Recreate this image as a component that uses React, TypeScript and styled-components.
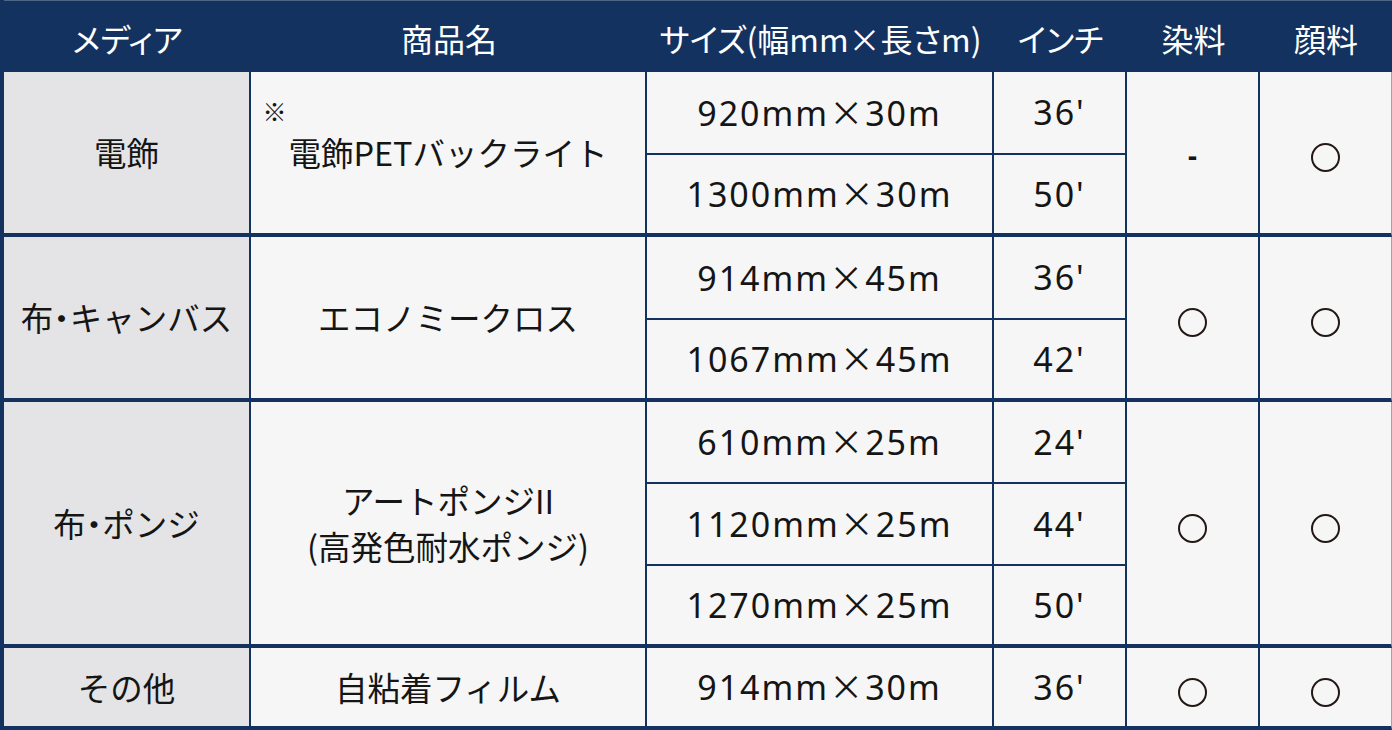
import React, { FC } from 'react';
import styled, { createGlobalStyle } from 'styled-components';

const GlobalStyle = createGlobalStyle`
    html, body {
        margin: 0;
        padding: 0;
        background: #f6f6f6;
    }
    body {
        font-family: "Noto Sans CJK JP", "Noto Sans", sans-serif;
        color: #151515;
    }
`;

const NAVY = '#14325f';

const TableStyled = styled.table`
    width: 1392px;
    table-layout: fixed;
    border-collapse: separate;
    border-spacing: 0;
    border-left: 4px solid ${NAVY};
`;

const HeadRow = styled.tr`
    background: ${NAVY};
`;

const HeadCell = styled.th<{ w: number }>`
    width: ${(p) => p.w}px;
    height: 72px;
    box-sizing: border-box;
    padding: 3px 0 0;
    border-top: 1px solid #4d6686;
    color: #ffffff;
    font-size: 32px;
    font-weight: 400;
    font-feature-settings: "palt";
    text-align: center;
    vertical-align: middle;
`;

const Cell = styled.td<{ h?: number; end?: boolean; media?: boolean; last?: boolean }>`
    height: ${(p) => (p.h ? `${p.h}px` : 'auto')};
    padding: 0;
    background: ${(p) => (p.media ? '#e4e4e6' : '#f6f6f6')};
    border-right: ${(p) => (p.last ? '1px solid #9aa4b4' : `2px solid ${NAVY}`)};
    border-bottom: ${(p) => (p.end ? 4 : 2)}px solid ${NAVY};
    font-size: 32.5px;
    text-align: center;
    vertical-align: middle;
    line-height: 1.42;
`;

const Num = styled.span`
    font-family: "Noto Sans", "DejaVu Sans", sans-serif;
    font-size: 34px;
    letter-spacing: 2px;
`;

const Times = styled.span`
    font-family: "Noto Sans CJK JP", sans-serif;
    font-feature-settings: "palt";
    letter-spacing: 0;
    margin-right: 2px;
`;

const Dot = styled.span`
    font-feature-settings: "palt";
`;

const NameWrap = styled.div`
    position: relative;
    display: inline-block;
`;

const NoteMark = styled.span`
    position: absolute;
    left: -26px;
    top: -30px;
    font-size: 24px;
    line-height: 1;
`;

const Mark = styled.span`
    display: inline-block;
    width: 25px;
    height: 25px;
    border: 2.6px solid #231815;
    border-radius: 50%;
    vertical-align: middle;
`;

const Dash = styled.span`
    font-family: "Noto Sans", sans-serif;
    font-size: 28px;
    font-weight: 700;
`;

const SizeText: FC<{ value: string }> = ({ value }) => {
    const [w, l] = value.split('×');
    return (
        <Num>
            {w}
            <Times>×</Times>
            {l}
        </Num>
    );
};

interface Group {
    media: React.ReactNode;
    name: React.ReactNode;
    sizes: [string, string][];
    dye: boolean;
    pigment: boolean;
}

const groups: Group[] = [
    {
        media: '電飾',
        name: (
            <NameWrap>
                <NoteMark>※</NoteMark>
                電飾PETバックライト
            </NameWrap>
        ),
        sizes: [['920mm×30m', "36'"], ['1300mm×30m', "50'"]],
        dye: false,
        pigment: true,
    },
    {
        media: <>布<Dot>・</Dot>キャンバス</>,
        name: 'エコノミークロス',
        sizes: [['914mm×45m', "36'"], ['1067mm×45m', "42'"]],
        dye: true,
        pigment: true,
    },
    {
        media: <>布<Dot>・</Dot>ポンジ</>,
        name: (
            <>
                アートポンジII
                <br />
                (高発色耐水ポンジ)
            </>
        ),
        sizes: [['610mm×25m', "24'"], ['1120mm×25m', "44'"], ['1270mm×25m', "50'"]],
        dye: true,
        pigment: true,
    },
    {
        media: 'その他',
        name: '自粘着フィルム',
        sizes: [['914mm×30m', "36'"]],
        dye: true,
        pigment: true,
    },
];

const headers: [string, number][] = [
    ['メディア', 247],
    ['商品名', 396],
    ['サイズ(幅mm×長さm)', 347],
    ['インチ', 133],
    ['染料', 133],
    ['顔料', 132],
];

const rowHeight = (group: number, row: number, count: number) => {
    const isEnd = row === count - 1;
    if (group <= 1) return isEnd ? 78 : 81;
    return isEnd ? 78 : 80;
};

const App: FC = () => (
    <>
        <GlobalStyle />
        <TableStyled>
            <thead>
                <HeadRow>
                    {headers.map(([label, w]) => (
                        <HeadCell key={label} w={w}>{label}</HeadCell>
                    ))}
                </HeadRow>
            </thead>
            <tbody>
                {groups.map((g, gi) =>
                    g.sizes.map(([size, inch], ri) => {
                        const span = g.sizes.length;
                        const end = ri === span - 1;
                        return (
                            <tr key={`${gi}-${ri}`}>
                                {ri === 0 && (
                                    <>
                                        <Cell media end rowSpan={span}>{g.media}</Cell>
                                        <Cell end rowSpan={span}>{g.name}</Cell>
                                    </>
                                )}
                                <Cell h={rowHeight(gi, ri, span)} end={end}><SizeText value={size} /></Cell>
                                <Cell end={end}><Num>{inch}</Num></Cell>
                                {ri === 0 && (
                                    <>
                                        <Cell end rowSpan={span}>{g.dye ? <Mark /> : <Dash>-</Dash>}</Cell>
                                        <Cell end last rowSpan={span}>{g.pigment ? <Mark /> : <Dash>-</Dash>}</Cell>
                                    </>
                                )}
                            </tr>
                        );
                    })
                )}
            </tbody>
        </TableStyled>
    </>
);

export default App;
